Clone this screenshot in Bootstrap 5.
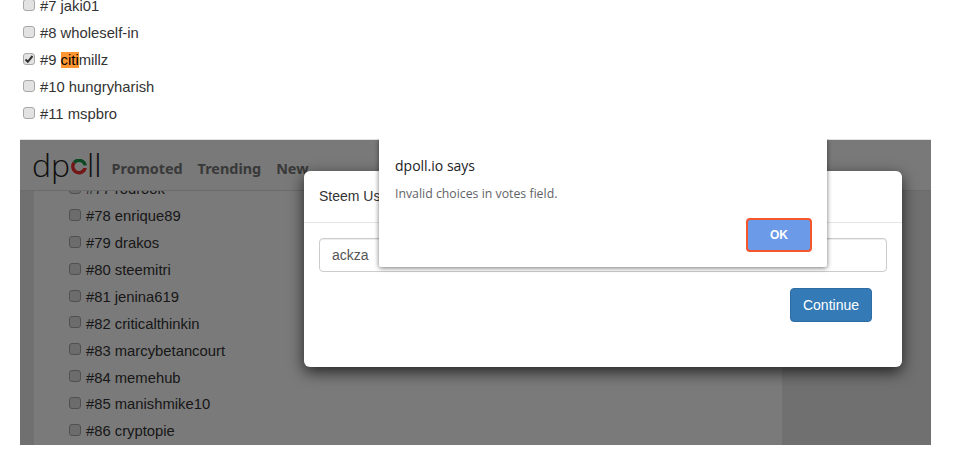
<!DOCTYPE html>
<html lang="en">
<head>
    <meta charset="UTF-8">
    <title>dpoll.io</title>
    <link href="https://cdn.jsdelivr.net/npm/bootstrap@5.3.0/dist/css/bootstrap.min.css" rel="stylesheet">
    <style>
        html, body { height: 462px; overflow: hidden; }
        body { background: #fff; font-family: "Liberation Sans", Arial, sans-serif; font-size: 14px; color: #333; }
        .vote-row { height: 26.9px; gap: 5px; white-space: nowrap; font-size: 14.8px; }
        .vote-box {
            appearance: none; width: 12px; height: 12px; margin: 0 0 3px; flex: none;
            background: #e2e2e2 center / 10px no-repeat; border: 1px solid #a8a8a8; border-radius: 3px;
        }
        .vote-box:checked {
            background-image: url("data:image/svg+xml,%3Csvg xmlns='http://www.w3.org/2000/svg' viewBox='0 0 10 10'%3E%3Cpath d='M1.5 5.5l2.3 2.3L8.5 2' fill='none' stroke='%23333' stroke-width='2'/%3E%3C/svg%3E");
        }
        .top-votes { height: 146px; padding-left: 23px; margin-top: -7px; }
        .hit { background: #ff9632; color: #000; }
        .shot { margin: 0 27px 0 20px; height: 306px; border-top: 1px solid #e3e3e3; position: relative; overflow: hidden; background: #ebebeb; }
        .shot-nav { height: 51px; background: #fcfcfc; border-bottom: 1px solid #e0e0e0; padding-left: 12px; gap: 15px; }
        .logo { font-family: "Open Sans", sans-serif; font-weight: 300; font-size: 32px; line-height: 1; color: #222; height: 36px; margin-right: -5px; }
        .logo-ring { margin: 4px 0 0 1px; }
        .shot-link { font-family: "Noto Sans", sans-serif; font-weight: 700; font-size: 14.4px; color: #777; margin-top: 7px; }
        .shot-main { margin-left: 14px; width: 748px; height: 254px; background: #fff; overflow: hidden; padding-left: 35px; }
        .shot-votes { margin-top: -15px; }
        .shade { position: absolute; inset: 0; background: rgba(0, 0, 0, .52); }
        .steem-modal {
            position: absolute; left: 284px; top: 31px; width: 598px; height: 196px;
            background: #fff; border-radius: 6px; box-shadow: 0 5px 15px rgba(0, 0, 0, .7);
        }
        .steem-head { height: 52px; padding: 15px; border-bottom: 1px solid #e5e5e5; font-size: 14px; color: #333; line-height: 20px; }
        .steem-body { padding: 15px; }
        .steem-input { height: 34px; border: 1px solid #ccc; border-radius: 4px; padding: 6px 12px; color: #555; box-shadow: inset 0 1px 1px rgba(0, 0, 0, .075); line-height: 20px; }
        .steem-btn { width: 82px; height: 34px; margin: 16px 15px 0 auto; display: block; background: #337ab7; border: 1px solid #2e6da4; border-radius: 4px; color: #fff; font-size: 14px; padding: 0; }
        .alert-box {
            position: absolute; left: 379px; top: 139px; width: 448px; height: 128px; padding: 0 16px;
            background: #fff; border-radius: 0 0 2px 2px; box-shadow: 0 1px 5px rgba(0, 0, 0, .55);
            clip-path: inset(0 -10px -10px -10px);
            font-family: "Open Sans", sans-serif;
        }
        .alert-title { font-size: 14px; color: #202124; margin-top: 17px; line-height: 20px; }
        .alert-msg { font-size: 12.3px; color: #5f6368; margin-top: 10px; line-height: 16px; }
        .alert-ok { position: absolute; right: 15px; bottom: 15px; width: 66px; height: 34px; background: #6a9ae8; border: 2px solid #f4572e; border-radius: 4px; color: #fff; font: 700 12px "Liberation Sans", Arial, sans-serif; padding: 0; }
    </style>
</head>
<body>
    <div class="top-votes">
        <div class="vote-row d-flex align-items-center"><input type="checkbox" class="vote-box"><span>#7 jaki01</span></div>
        <div class="vote-row d-flex align-items-center"><input type="checkbox" class="vote-box"><span>#8 wholeself-in</span></div>
        <div class="vote-row d-flex align-items-center"><input type="checkbox" class="vote-box" checked><span>#9 <span class="hit">citi</span>millz</span></div>
        <div class="vote-row d-flex align-items-center"><input type="checkbox" class="vote-box"><span>#10 hungryharish</span></div>
        <div class="vote-row d-flex align-items-center"><input type="checkbox" class="vote-box"><span>#11 mspbro</span></div>
    </div>

    <div class="shot">
        <div class="shot-nav d-flex align-items-center">
            <div class="logo d-flex align-items-center">
                <span>dp</span>
                <svg class="logo-ring" width="16" height="16" viewBox="0 0 16 16">
                    <path d="M3.2 3.6A6.2 6.2 0 1 0 14.2 8" fill="none" stroke="#e33" stroke-width="3.4"/>
                    <path d="M3.2 3.6A6.2 6.2 0 0 1 14.2 8" fill="none" stroke="#1a9a4a" stroke-width="3.4"/>
                    <rect x="11" y="6.4" width="5" height="2.6" fill="#fcfcfc"/>
                </svg>
                <span>ll</span>
            </div>
            <span class="shot-link">Promoted</span>
            <span class="shot-link">Trending</span>
            <span class="shot-link">New</span>
        </div>
        <div class="shot-main">
            <div class="shot-votes">
                <div class="vote-row d-flex align-items-center"><input type="checkbox" class="vote-box"><span>#77 rodrook</span></div>
                <div class="vote-row d-flex align-items-center"><input type="checkbox" class="vote-box"><span>#78 enrique89</span></div>
                <div class="vote-row d-flex align-items-center"><input type="checkbox" class="vote-box"><span>#79 drakos</span></div>
                <div class="vote-row d-flex align-items-center"><input type="checkbox" class="vote-box"><span>#80 steemitri</span></div>
                <div class="vote-row d-flex align-items-center"><input type="checkbox" class="vote-box"><span>#81 jenina619</span></div>
                <div class="vote-row d-flex align-items-center"><input type="checkbox" class="vote-box"><span>#82 criticalthinkin</span></div>
                <div class="vote-row d-flex align-items-center"><input type="checkbox" class="vote-box"><span>#83 marcybetancourt</span></div>
                <div class="vote-row d-flex align-items-center"><input type="checkbox" class="vote-box"><span>#84 memehub</span></div>
                <div class="vote-row d-flex align-items-center"><input type="checkbox" class="vote-box"><span>#85 manishmike10</span></div>
                <div class="vote-row d-flex align-items-center"><input type="checkbox" class="vote-box"><span>#86 cryptopie</span></div>
            </div>
        </div>
        <div class="shade"></div>
        <div class="steem-modal">
            <div class="steem-head">Steem Username</div>
            <div class="steem-body">
                <div class="steem-input">ackza</div>
                <button class="steem-btn" type="button">Continue</button>
            </div>
        </div>
    </div>

    <div class="alert-box">
        <div class="alert-title">dpoll.io says</div>
        <div class="alert-msg">Invalid choices in votes field.</div>
        <button class="alert-ok" type="button">OK</button>
    </div>
</body>
</html>
